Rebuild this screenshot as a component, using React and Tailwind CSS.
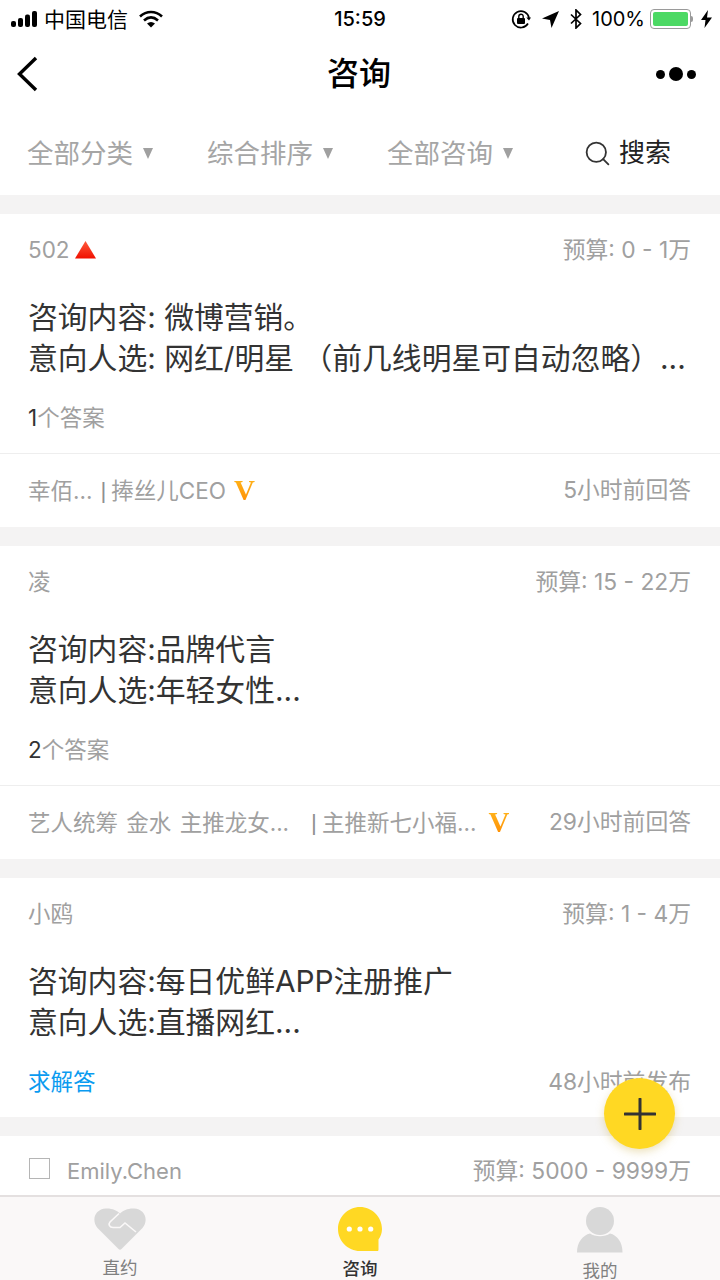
import { Search } from "lucide-react";

const cjk = "font-['Inter','Noto_Sans_CJK_SC',sans-serif]";

function StatusBar() {
  return (
    <div className="flex h-10 shrink-0 items-center justify-between pb-[2px] pl-[11px] pr-[8px] text-[20px] text-black">
      <div className="flex flex-1 items-center">
        <svg width="28" height="16" viewBox="0 0 28 16" fill="currentColor">
          <rect x="0" y="10" width="5" height="6" rx="2" />
          <rect x="7" y="7" width="5" height="9" rx="2" />
          <rect x="14" y="3.5" width="5" height="12.5" rx="2" />
          <rect x="21" y="0" width="5" height="16" rx="2" />
        </svg>
        <span className="ml-[5px] text-[21px] leading-none">中国电信</span>
        <svg className="ml-[11px]" width="24" height="18" viewBox="0 0 24 18" fill="none" stroke="currentColor" strokeWidth="2.6">
          <path d="M1 6.5C7.5 0.5 16.5 0.5 23 6.5" />
          <path d="M5 10.5C9.5 6.5 14.5 6.5 19 10.5" />
          <path d="M12 17.5L8 13.5C10.5 11.5 13.5 11.5 16 13.5Z" fill="currentColor" stroke="none" />
        </svg>
      </div>
      <span className="mr-[3px] text-[20px] font-medium leading-none">15:59</span>
      <div className="flex flex-1 items-center justify-end">
        <svg width="20" height="20" viewBox="0 0 20 20" fill="none" stroke="currentColor" strokeWidth="1.7">
          <path d="M17 14.5A8.2 8.2 0 1 1 18 9" />
          <path d="M15.3 8.5L18 11.5L20 8.5" fill="currentColor" stroke="none" />
          <rect x="6" y="9" width="8" height="6" rx="1" fill="currentColor" stroke="none" />
          <path d="M7.8 9V7.4a2.2 2.2 0 0 1 4.4 0V9" strokeWidth="1.4" />
        </svg>
        <svg className="ml-[11px]" width="17" height="17" viewBox="0 0 17 17" fill="currentColor">
          <path d="M17 0L9.5 17L8 9L0 7.5Z" />
        </svg>
        <svg className="ml-[11px]" width="12" height="20" viewBox="0 0 12 20" fill="none" stroke="currentColor" strokeWidth="1.7">
          <path d="M1 5.5L10.5 14.5L6 19V1L10.5 5.5L1 14.5" />
        </svg>
        <span className="ml-[10px] text-[20px] leading-none">100%</span>
        <div className="ml-[5px] flex items-center">
          <div className="h-[20px] w-[41px] rounded-[4px] border border-[#9a9a9a] p-[2px]">
            <div className="h-full w-full rounded-[2px] bg-[#4cd964]" />
          </div>
          <div className="h-[6px] w-[2px] rounded-r-sm bg-[#9a9a9a]" />
        </div>
        <svg className="ml-[8px]" width="11" height="18" viewBox="0 0 11 18" fill="currentColor">
          <path d="M7 0L0 10H4.5L3.5 18L11 7.5H6Z" />
        </svg>
      </div>
    </div>
  );
}

function NavBar() {
  return (
    <div className="flex h-[68px] shrink-0 items-center justify-between pl-[16px] pr-[24px]">
      <div className="w-[46px]">
        <svg width="22" height="36" viewBox="0 0 22 36" fill="none" stroke="black" strokeWidth="3.4">
          <path d="M20 2L3.5 18L20 34" />
        </svg>
      </div>
      <h1 className="text-[32px] leading-none font-medium text-black">咨询</h1>
      <div className="flex items-center gap-[4px]">
        <div className="h-[9px] w-[9px] rounded-full bg-black" />
        <div className="h-[14px] w-[14px] rounded-full bg-black" />
        <div className="h-[9px] w-[9px] rounded-full bg-black" />
      </div>
    </div>
  );
}

function Filter({ label, className }) {
  return (
    <div className={`flex items-center ${className}`}>
      <span className="text-[26.5px] leading-none text-[#a5a5a5]">{label}</span>
      <span className="ml-[10px] h-0 w-0 border-x-[5px] border-t-[11px] border-x-transparent border-t-[#a0a0a0]" />
    </div>
  );
}

function FilterBar() {
  return (
    <div className="flex h-[87px] shrink-0 items-center pl-[27px] pt-[3px]">
      <Filter label="全部分类" className="w-[180px]" />
      <Filter label="综合排序" className="w-[180px]" />
      <Filter label="全部咨询" className="w-[196px]" />
      <Search size={29} strokeWidth={1.5} className="text-[#333]" />
      <span className="ml-[7px] text-[26px] leading-none text-[#222]">搜索</span>
    </div>
  );
}

function VBadge({ className }) {
  return (
    <span className={`${className} bg-linear-to-b from-[#ffb81c] to-[#ff8a00] bg-clip-text font-['Liberation_Serif',serif] text-[29px] leading-none font-bold text-transparent`}>V</span>
  );
}

function Card({ name, budget, lines, children }) {
  return (
    <div className="mt-[19px] shrink-0 bg-white">
      <div className="flex h-[72px] items-center justify-between pl-[28px] pr-[29px] text-[22.8px] text-[#a0a0a0]">
        <span className="text-[22.5px]">{name}</span>
        <span>{budget}</span>
      </div>
      <div className="pt-[11px] text-[29.8px] leading-[41px] text-[#333]">
        {lines.map((l) => (
          <p key={l} className="whitespace-pre pl-[28px]">{l}</p>
        ))}
      </div>
      {children}
    </div>
  );
}

function AnswerFooter({ count, who, sep, vGap, title, time }) {
  return (
    <>
      <div className="flex h-[74px] items-center pl-[28px] pt-[3px] text-[22.5px] text-[#a0a0a0]">
        <span className="text-[#333]">{count}</span>个答案
      </div>
      <div className="flex h-[74px] items-center justify-between border-t border-[#eeeeee] pl-[28px] pr-[29px] text-[22.5px] text-[#a0a0a0]">
        <div className="flex items-center">
          <span className="[word-spacing:2px]">{who}</span>
          <span className={`${sep} font-['Liberation_Sans',sans-serif] text-[#8f8f8f]`}>|</span>
          <span className="ml-[5px]">{title}</span>
          <VBadge className={vGap} />
        </div>
        <span className="text-[22.8px]">{time}</span>
      </div>
    </>
  );
}

function TabItem({ label, active, children }) {
  return (
    <div className="flex w-[240px] flex-col items-center pt-[10px]">
      <div className="flex h-[46px] items-center justify-center">{children}</div>
      <span className={`mt-[6px] text-[17.5px] leading-[24px] ${active ? "font-medium text-[#333]" : "text-[#808080]"}`}>{label}</span>
    </div>
  );
}

export default function App() {
  return (
    <div className={`relative flex h-[1280px] w-[720px] flex-col overflow-hidden bg-[#f4f3f3] ${cjk}`}>
      <div className="shrink-0 bg-white">
        <StatusBar />
        <NavBar />
        <FilterBar />
      </div>

      <div className="min-h-0 flex-1 overflow-hidden">
        <Card
          name={
            <span className="flex items-center">
              502
              <svg className="ml-[5px]" width="21" height="18" viewBox="0 0 21 18">
                <defs>
                  <linearGradient id="up" x1="0" y1="0" x2="0" y2="1">
                    <stop offset="0" stopColor="#ff5a3c" />
                    <stop offset="1" stopColor="#f01000" />
                  </linearGradient>
                </defs>
                <path d="M10.5 0L21 17.5H0Z" fill="url(#up)" />
              </svg>
            </span>
          }
          budget="预算: 0 - 1万"
          lines={["咨询内容: 微博营销。", "意向人选: 网红/明星 （前几线明星可自动忽略）..."]}
        >
          <AnswerFooter count="1" who="幸佰..." sep="ml-[8px]" vGap="ml-[8px]" title="捧丝儿CEO" time="5小时前回答" />
        </Card>

        <Card
          name="凌"
          budget="预算: 15 - 22万"
          lines={["咨询内容:品牌代言", "意向人选:年轻女性..."]}
        >
          <AnswerFooter count="2" who="艺人统筹 金水 主推龙女..." sep="ml-[22px]" vGap="ml-[12px]" title="主推新七小福..." time="29小时前回答" />
        </Card>

        <Card
          name="小鸥"
          budget="预算: 1 - 4万"
          lines={["咨询内容:每日优鲜APP注册推广", "意向人选:直播网红..."]}
        >
          <div className="flex h-[74px] items-center justify-between pl-[28px] pr-[29px] pt-[4px] text-[22.8px] text-[#a0a0a0]">
            <span className="text-[22.5px] text-[#0a9bf0]">求解答</span>
            <span>48小时前发布</span>
          </div>
        </Card>

        <div className="mt-[19px] flex h-[70px] items-center justify-between bg-white pl-[29px] pr-[29px] text-[22.8px] text-[#a0a0a0]">
          <div className="flex items-center">
            <div className="mb-[5px] h-[21px] w-[21px] border border-[#b5b5b5]" />
            <span className="ml-[17px] text-[22px]">Emily.Chen</span>
          </div>
          <span>预算: 5000 - 9999万</span>
        </div>
      </div>

      <div className="flex h-[85px] shrink-0 overflow-hidden border-t-2 border-[#e4e0e0] bg-[#faf8f8]">
        <TabItem label="直约">
          <svg width="52" height="42" viewBox="0 0 52 42" fill="none">
            <path d="M24.5 41L3.5 20C-3 12 1 1 12 0.5C18 0.2 23 2.5 26 5.5C29 2.5 34 0.2 40 0.5C51 1 55 12 48.5 20L27.5 41C26.5 42 25.5 42 24.5 41Z" fill="#d8d8d8" />
            <path d="M25 5.5L16 14C14 16.5 15.5 19.5 19 19.5H26L31 15L42 24" stroke="#faf8f8" strokeWidth="1.6" />
          </svg>
        </TabItem>
        <TabItem label="咨询" active>
          <svg width="44" height="44" viewBox="0 0 44 44">
            <path d="M22 0C34 0 44 10 44 22C44 26 42.5 29.5 40.5 32.5V42.5C40.5 43.5 40 44 39 44H22C10 44 0 34 0 22C0 10 10 0 22 0Z" fill="#ffd823" />
            <circle cx="11.3" cy="22" r="2.6" fill="white" />
            <circle cx="22" cy="22" r="2.6" fill="white" />
            <circle cx="32.7" cy="22" r="2.6" fill="white" />
          </svg>
        </TabItem>
        <TabItem label="我的">
          <svg width="46" height="46" viewBox="0 0 46 46" fill="#d8d8d8">
            <circle cx="23" cy="14" r="14" />
            <path d="M0 45.5C0 35 6 28 13 26.5C18 30 28 30 33 26.5C40 28 45.5 35 45.5 45.5Z" />
          </svg>
        </TabItem>
      </div>

      {/* floating add button */}
      <div className="absolute left-[604px] top-[1078px] flex h-[71px] w-[71px] items-center justify-center rounded-full bg-[#ffd823] shadow-[0_3px_8px_rgba(200,170,60,0.35)]">
        <svg width="32" height="32" viewBox="0 0 32 32" stroke="#333" strokeWidth="3" strokeLinecap="round">
          <path d="M16 1V31M1 16H31" />
        </svg>
      </div>
    </div>
  );
}
